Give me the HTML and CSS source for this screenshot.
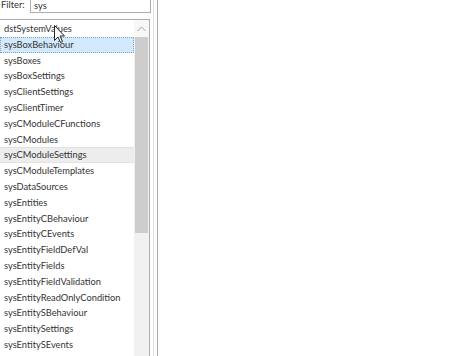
FILE: index.html
```html
<!doctype html>
<html lang="en">
<head>
    <meta charset="UTF-8">
    <title>Filter</title>
    <link rel="stylesheet" href="styles.css">
</head>
<body>
<div class="pane">
    <div class="panel">
        <div class="filter">
            <span class="filter-label">Filter:</span>
            <div class="filter-input">sys</div>
        </div>
        <div class="listbox">
            <ul class="items">
                <li>dstSystemValues</li>
                <li class="selected">sysBoxBehaviour</li>
                <li>sysBoxes</li>
                <li>sysBoxSettings</li>
                <li>sysClientSettings</li>
                <li>sysClientTimer</li>
                <li>sysCModuleCFunctions</li>
                <li>sysCModules</li>
                <li class="hover">sysCModuleSettings</li>
                <li>sysCModuleTemplates</li>
                <li>sysDataSources</li>
                <li>sysEntities</li>
                <li>sysEntityCBehaviour</li>
                <li>sysEntityCEvents</li>
                <li>sysEntityFieldDefVal</li>
                <li>sysEntityFields</li>
                <li>sysEntityFieldValidation</li>
                <li>sysEntityReadOnlyCondition</li>
                <li>sysEntitySBehaviour</li>
                <li>sysEntitySettings</li>
                <li>sysEntitySEvents</li>
            </ul>
            <div class="scroll">
                <div class="scroll-up">
                    <svg width="9" height="6" viewBox="0 0 9 6"><path d="M0.5 5 L4.5 1 L8.5 5" fill="none" stroke="#a3a3a3" stroke-width="1"/></svg>
                </div>
                <div class="thumb"></div>
                <div class="track"></div>
            </div>
        </div>
    </div>
</div>

<svg class="cursor" width="12" height="19" viewBox="0 0 12 19">
    <path d="M0.5 0.5 L0.5 15.5 L4 12 L6.5 17.5 L8.5 16.5 L6 11 L10.5 11 Z" fill="#fff" stroke="#222" stroke-width="1"/>
</svg>
</body>
</html>
```

FILE: styles.css
```css
body {
    margin: 0;
    background: #fff;
    font-family: Lato, "Noto Sans", sans-serif;
    font-size: 9.3px;
    color: #333;
    overflow: hidden;
    position: relative;
    height: 356px;
}

.pane {
    width: 157px;
    height: 356px;
    border-right: 1px solid #a9a9a9;
}

.panel {
    width: 153px;
    height: 356px;
    border-right: 1px solid #e2e2e2;
    display: flex;
    flex-direction: column;
}

.filter {
    display: flex;
    align-items: flex-end;
    margin-top: -3px;
    height: 16px;
}

.filter-label {
    width: 29px;
    line-height: 12px;
    padding-bottom: 2px;
    padding-left: 1px;
}

.filter-input {
    width: 116px;
    height: 14px;
    border: 1px solid #abadb3;
    padding-left: 3px;
    line-height: 15px;
    color: #333;
}

.listbox {
    margin-top: 6px;
    margin-left: -1px;
    width: 149px;
    flex: 1;
    border: 1px solid #abadb3;
    border-bottom: none;
    display: flex;
    overflow: hidden;
}

.items {
    list-style: none;
    margin: 0;
    padding: 1px 0 0 0;
    flex: 1;
    min-width: 0;
    overflow: hidden;
}

.items li {
    height: 15.8px;
    line-height: 15px;
    padding-left: 4px;
    box-sizing: border-box;
    white-space: nowrap;
}

.items .selected {
    background: #d3eafc;
    outline: 1px dotted #7da2ce;
    outline-offset: -1px;
}

.items .hover {
    background: #ededed;
    border-top: 1px solid #e2e2e2;
    border-bottom: 1px solid #e2e2e2;
    line-height: 13px;
}

.scroll {
    width: 15px;
    flex: none;
    display: flex;
    flex-direction: column;
    background: #f0f0f0;
}

.scroll-up {
    height: 17px;
    display: flex;
    align-items: center;
    justify-content: center;
    background: #f7f7f7;
}

.thumb {
    height: 196px;
    margin: 0 1px 0 1px;
    background: #cdcdcd;
}

.track {
    flex: 1;
    background: #f1f1f1;
}

.cursor {
    position: absolute;
    left: 54px;
    top: 25px;
}
```
